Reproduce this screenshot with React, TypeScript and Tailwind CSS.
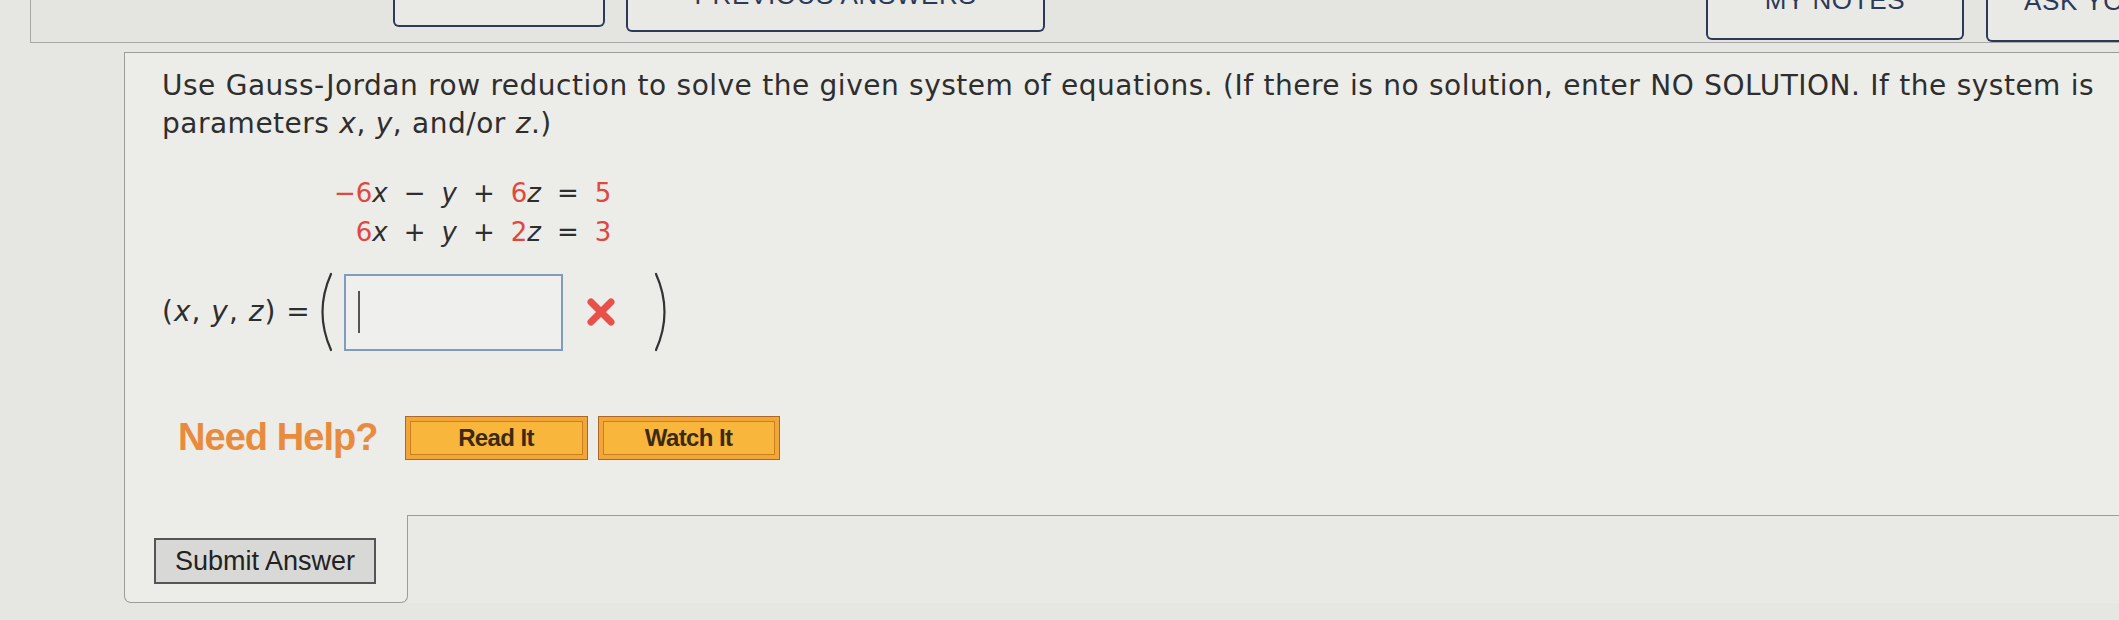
import React from 'react';

const verdana = { fontFamily: '"DejaVu Sans", Verdana, sans-serif' };
const arial = { fontFamily: '"Liberation Sans", Arial, sans-serif' };

function TopButton({
  label,
  width,
  height,
  ml,
  lift,
  pl,
}: {
  label: string;
  width: number;
  height: number;
  ml: number;
  lift: number;
  pl?: number;
}) {
  return (
    <div
      className={`flex shrink-0 overflow-hidden rounded-b-[6px] border-2 border-t-0 border-[#2d3a57] bg-[#e9e9e6] ${pl ? 'justify-start' : 'justify-center'}`}
      style={{ width, height, marginLeft: ml, paddingLeft: pl }}
    >
      <span className="whitespace-nowrap text-[26px] leading-none tracking-wide text-[#2d3a57]" style={{ ...arial, marginTop: -lift }}>
        {label}
      </span>
    </div>
  );
}

function Paren({ right = false }: { right?: boolean }) {
  return (
    <svg width="24" height="80" viewBox="0 0 24 80" className="shrink-0">
      <path
        d={right ? 'M5 2 Q22 40 5 78' : 'M19 2 Q2 40 19 78'}
        fill="none"
        stroke="#333"
        strokeWidth="2.2"
        strokeLinecap="round"
      />
    </svg>
  );
}

const R = ({ children }: { children: React.ReactNode }) => <span className="text-[#e0473f]">{children}</span>;
const V = ({ children }: { children: React.ReactNode }) => <span className="italic">{children}</span>;

function OrangeButton({ label, width }: { label: string; width: number }) {
  return (
    <div className="flex h-[44px] border border-[#a8692a] bg-[#f3a537] p-[4px]" style={{ width }}>
      <div className="flex flex-1 items-center justify-center border border-[#c9801f] bg-[#f9b63c]">
        <span className="text-[24px] font-bold tracking-tight text-[#3b2a12]" style={arial}>
          {label}
        </span>
      </div>
    </div>
  );
}

export default function App() {
  return (
    <div className="h-[620px] w-[2119px] overflow-hidden bg-[#e6e6e3] text-[#2e2e2e]">
      {/* top toolbar */}
      <div className="ml-[30px] flex h-[43px] items-start border-b border-l border-[#a9a9a6] bg-[#e4e4e1]">
        <TopButton label="" width={212} height={27} ml={362} lift={20} />
        <TopButton label="PREVIOUS ANSWERS" width={419} height={32} ml={21} lift={18} />
        <TopButton label="MY NOTES" width={258} height={40} ml={661} lift={13} />
        <TopButton label="ASK YOUR TEACHER" width={340} height={42} ml={22} lift={12} pl={36} />
      </div>

      {/* question panel */}
      <div className="ml-[124px] mt-[9px]">
        <div className="border-l border-t border-[#9c9c99] bg-[#ecece9] pb-[49px] pl-[37px] pt-[14px]" style={verdana}>
          <p className="whitespace-nowrap text-[28px] leading-[38px] tracking-[0.5px] [word-spacing:0.5px]">
            Use Gauss-Jordan row reduction to solve the given system of equations. (If there is no solution, enter NO SOLUTION. If the
            system is
            <br />
            parameters <V>x</V>, <V>y</V>, and/or <V>z</V>.)
          </p>

          <div className="ml-[172px] mt-[31px] inline-grid grid-cols-[auto_auto_auto_auto_auto_auto_auto] gap-x-[16px] text-[26px] leading-[39px]">
            <span className="text-right"><R>−6</R><V>x</V></span>
            <span className="text-center">−</span>
            <span className="text-center"><V>y</V></span>
            <span className="text-center">+</span>
            <span className="text-right"><R>6</R><V>z</V></span>
            <span className="text-center">=</span>
            <span className="text-right"><R>5</R></span>

            <span className="text-right"><R>6</R><V>x</V></span>
            <span className="text-center">+</span>
            <span className="text-center"><V>y</V></span>
            <span className="text-center">+</span>
            <span className="text-right"><R>2</R><V>z</V></span>
            <span className="text-center">=</span>
            <span className="text-right"><R>3</R></span>
          </div>

          <div className="mt-[20px] flex items-center text-[28px] tracking-[1px]">
            <span className="whitespace-nowrap">
              (<V>x</V>, <V>y</V>, <V>z</V>) =
            </span>
            <div className="ml-[1px]">
              <Paren />
            </div>
            <div className="ml-[8px] flex h-[77px] w-[219px] items-center border-2 border-[#7f9cbd] bg-[#efefed] pl-[12px]">
              <div className="h-[42px] w-[2px] bg-[#555]" />
            </div>
            <svg width="32" height="32" viewBox="0 0 32 32" className="ml-[22px]">
              <path d="M6 6 L26 26 M26 6 L6 26" stroke="#e8504a" strokeWidth="7" strokeLinecap="round" />
            </svg>
            <div className="ml-[34px]">
              <Paren right />
            </div>
          </div>

          <div className="ml-[16px] mt-[57px] flex items-center">
            <span className="text-[38px] font-bold tracking-tight text-[#e98b3d]" style={arial}>
              Need Help?
            </span>
            <div className="ml-[27px]">
              <OrangeButton label="Read It" width={183} />
            </div>
            <div className="ml-[10px]">
              <OrangeButton label="Watch It" width={182} />
            </div>
          </div>
        </div>

        {/* submit row */}
        <div className="flex">
          <div className="h-[88px] w-[284px] rounded-b-[7px] border-b border-l border-r border-[#9c9c99] bg-[#ecece9] pl-[29px] pt-[23px]">
            <button
              type="button"
              className="flex h-[46px] w-[222px] items-center justify-center border-2 border-[#555] bg-[#d8d8d6] text-[27px] text-[#222]"
              style={arial}
            >
              Submit Answer
            </button>
          </div>
          <div className="flex-1 border-t border-[#9c9c99] bg-[#e9e9e6]" />
        </div>
      </div>
    </div>
  );
}
